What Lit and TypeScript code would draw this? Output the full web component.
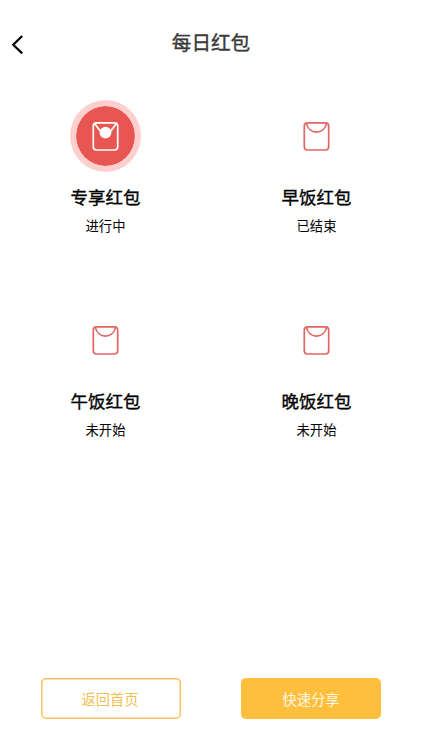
import { LitElement, html, css, svg } from "lit";
import { customElement, property } from "lit/decorators.js";

@customElement("packet-card")
class PacketCard extends LitElement {
  @property() name = "";
  @property() status = "";
  @property({ type: Boolean }) active = false;

  static styles = css`
    :host {
      display: flex;
      flex-direction: column;
      align-items: center;
      color: #000;
    }
    .badge {
      box-sizing: border-box;
      width: 71px;
      height: 72px;
      border-radius: 50%;
      border: 6px solid transparent;
      display: flex;
      align-items: center;
      justify-content: center;
      color: #e26663;
    }
    .active {
      border-color: #fdcfcf;
      background: #e75650;
      background-clip: padding-box;
      color: #fff;
    }
    svg {
      display: block;
    }
    .name {
      margin-top: 12px;
      font-size: 17.5px;
      line-height: 26px;
      font-weight: 400;
      -webkit-text-stroke: 0.35px currentColor;
    }
    .status {
      margin-top: 6px;
      font-size: 13.3px;
      line-height: 20px;
    }
  `;

  render() {
    return html`
      <div class="badge ${this.active ? "active" : ""}">
        <svg width="27" height="30" viewBox="0 0 27 30" fill="none" stroke="currentColor" stroke-width="1.7">
          <rect x="1.3" y="1.8" width="24.4" height="27.2" rx="3.2" />
          ${this.active
            ? svg`<path d="M2.8 2.8 L8.2 10 M24.2 2.8 L18.8 10" /><circle cx="13.5" cy="11.6" r="5.9" fill="currentColor" stroke="none" />`
            : svg`<path d="M3.4 2.4 C5.8 14 21.2 14 23.6 2.4" />`}
        </svg>
      </div>
      <div class="name">${this.name}</div>
      <div class="status">${this.status}</div>
    `;
  }
}

@customElement("app-root")
class AppRoot extends LitElement {
  static styles = css`
    :host {
      display: flex;
      flex-direction: column;
      box-sizing: border-box;
      height: 750px;
      background: #fff;
      font-family: "Noto Sans CJK SC", sans-serif;
    }
    header {
      display: grid;
      grid-template-columns: 40px 1fr 40px;
      align-items: center;
      height: 84px;
    }
    .back {
      display: block;
      margin: 5px 0 0 10px;
    }
    h1 {
      margin: 0 0 1px;
      text-align: center;
      font-size: 19.6px;
      line-height: 28px;
      font-weight: 400;
      color: #3a3a3a;
      -webkit-text-stroke: 0.4px currentColor;
    }
    .grid {
      display: grid;
      grid-template-columns: 1fr 1fr;
      grid-auto-rows: 204px;
      padding-top: 16px;
      flex: 1;
    }
    footer {
      display: flex;
      justify-content: space-between;
      padding: 0 41px 31px;
    }
    button {
      box-sizing: border-box;
      width: 140px;
      height: 41px;
      padding: 0 2px 1px 0;
      border: none;
      box-shadow: inset 0 0 0 1.5px #f8c15c;
      border-radius: 5px;
      background: #fff;
      color: #f3bf55;
      font: 14.3px "Noto Sans CJK SC", sans-serif;
    }
    .share {
      padding-right: 0;
      background: #ffbf3e;
      box-shadow: none;
      color: #fff8e4;
    }
  `;

  render() {
    return html`
      <header>
        <svg class="back" width="14" height="22" viewBox="0 0 14 22" fill="none" stroke="#000" stroke-width="2.2">
          <path d="M12.2 2 L3.2 10.7 L12.2 19.4" />
        </svg>
        <h1>每日红包</h1>
      </header>
      <div class="grid">
        <packet-card name="专享红包" status="进行中" active></packet-card>
        <packet-card name="早饭红包" status="已结束"></packet-card>
        <packet-card name="午饭红包" status="未开始"></packet-card>
        <packet-card name="晚饭红包" status="未开始"></packet-card>
      </div>
      <footer>
        <button>返回首页</button>
        <button class="share">快速分享</button>
      </footer>
    `;
  }
}
